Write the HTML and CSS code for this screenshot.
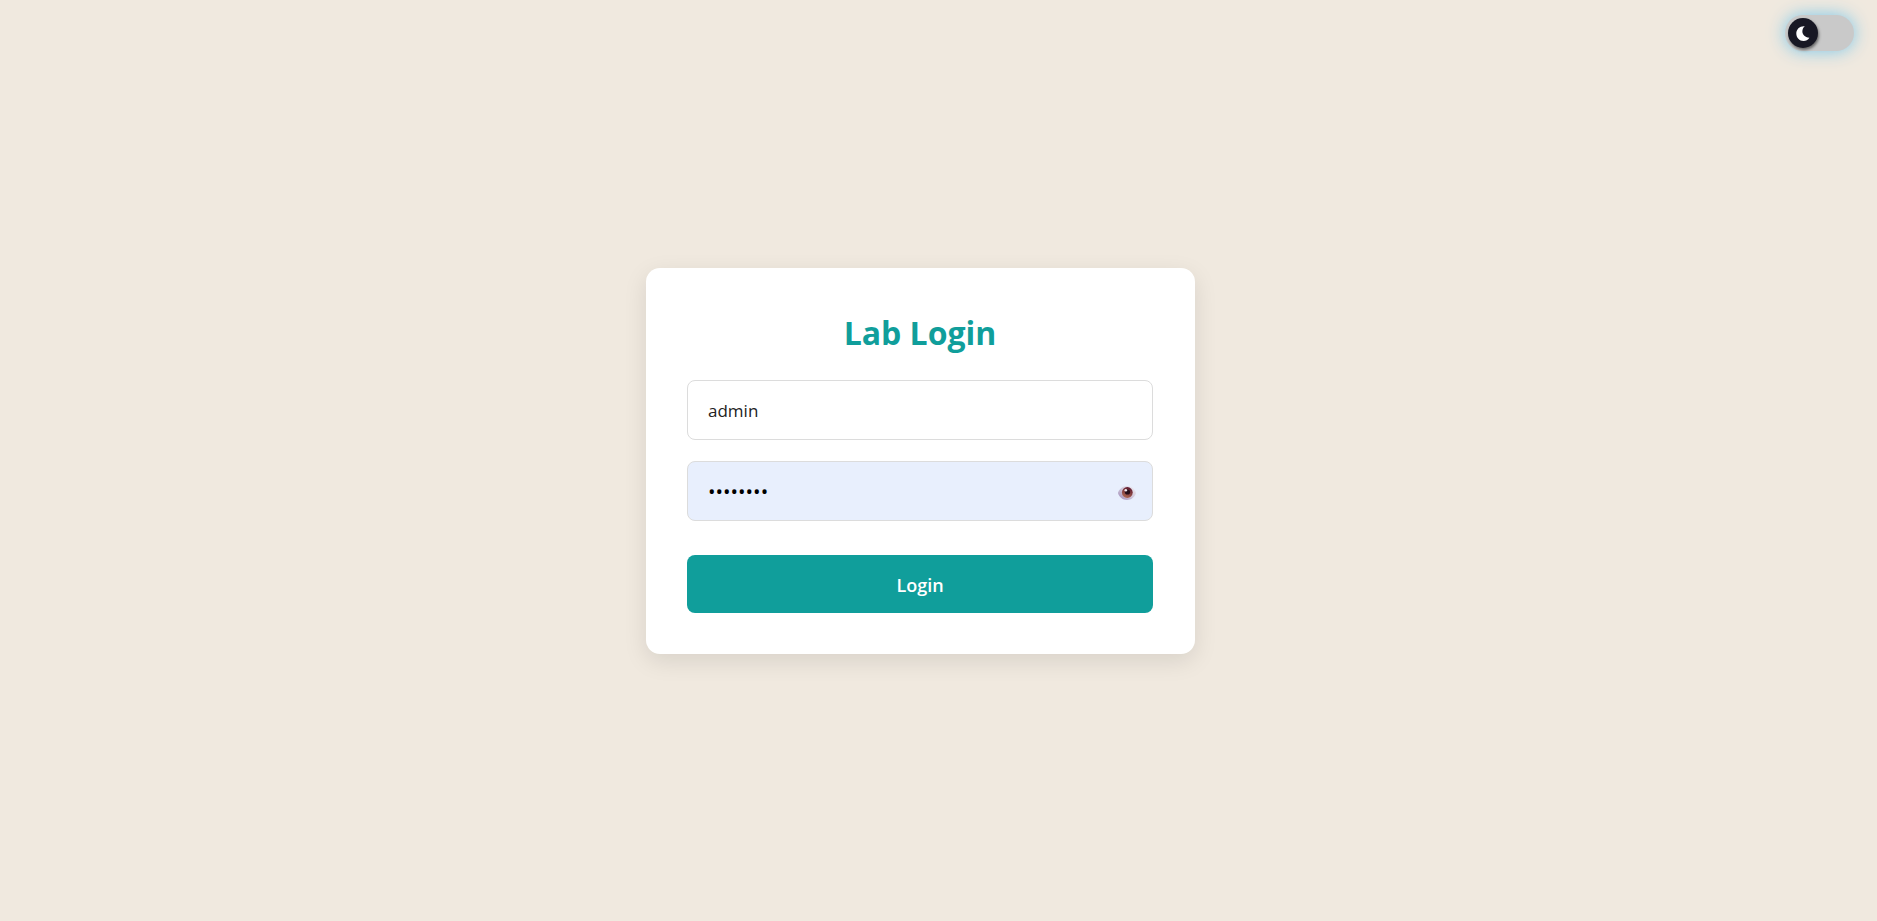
FILE: index.html
```html
<!DOCTYPE html>
<html lang="en">
<head>
<meta charset="utf-8">
<meta name="viewport" content="width=device-width, initial-scale=1">
<title>Lab Login</title>
<link rel="stylesheet" href="styles.css">
</head>
<body>
<label class="theme-toggle">
  <input class="theme-input" type="checkbox" aria-label="Dark mode">
  <span class="theme-knob">
    <svg class="moon" viewBox="0 0 14 15" aria-hidden="true"><path d="M8.800 .2C4.600 3.500 5.600 11.200 13.400 11.700C12 13.800 10 15 7.500 15C3.400 15 .3 11.700 .3 7.500C.3 3 4 -.3 8.800 .2Z" fill="#fff"/></svg>
  </span>
</label>
<main class="page">
  <form class="card">
    <h1 class="title">Lab Login</h1>
    <input class="field" type="text" value="admin" aria-label="Username">
    <div class="password">
      <input class="field field-filled" type="password" value="admin123" aria-label="Password">
      <button class="reveal" type="button" aria-label="Show password">
        <svg class="eye" viewBox="0 0 18 14" aria-hidden="true">
          <defs>
            <linearGradient id="white" x1="0" y1="1" x2="1" y2="0"><stop offset="0" stop-color="#9b86b5"/><stop offset=".5" stop-color="#cfc5d8"/><stop offset="1" stop-color="#f4f2f5"/></linearGradient>
            <linearGradient id="iris" x1=".7" y1="0" x2=".3" y2="1"><stop offset="0" stop-color="#5b1730"/><stop offset="1" stop-color="#b06a52"/></linearGradient>
          </defs>
          <path d="M0 7C1 2.800 5 0 9 0S17 2.800 18 7C17 11.200 13 14 9 14S1 11.200 0 7Z" fill="url(#white)"/>
          <circle cx="9.300" cy="6.500" r="5.400" fill="url(#iris)"/>
          <circle cx="9.500" cy="6" r="2.600" fill="#260e18"/>
          <circle cx="7.800" cy="4.300" r="1.300" fill="#f3e9ee"/>
        </svg>
      </button>
    </div>
    <button class="submit" type="submit">Login</button>
  </form>
</main>
</body>
</html>
```
FILE: styles.css
```css
* { box-sizing: border-box; }

body {
  margin: 0;
  background: #f0e9df;
  font-family: "Segoe UI", "Open Sans", "Noto Sans", sans-serif;
}

.page {
  min-height: 100vh;
  padding: 16px 36px 16px 0;
  display: flex;
  align-items: center;
  justify-content: center;
}

.card {
  width: 100%;
  max-width: 549px;
  padding: 41px 42px 41px 41px;
  display: flex;
  flex-direction: column;
  background: #fff;
  border-radius: 14px;
  box-shadow: 0 7px 23px rgba(0, 0, 0, 0.1);
}

.title {
  margin: 0 0 23px;
  font-size: 32px;
  line-height: 48px;
  font-weight: 700;
  text-align: center;
  color: #109e9b;
}

.field {
  display: block;
  width: 100%;
  height: 60px;
  padding: 2px 20px 0;
  border: 1px solid #dcdcdc;
  border-radius: 8px;
  background: #fff;
  color: #222;
  font-family: inherit;
  font-size: 17px;
}

.password {
  position: relative;
  margin: 21px 0 34px;
}

.field-filled {
  padding-right: 56px;
  background: #e8effd;
  color: #000;
  font-size: 20px;
}

.reveal {
  position: absolute;
  top: 0;
  right: 10px;
  width: 32px;
  height: 100%;
  padding: 4px 0 0;
  border: 0;
  background: none;
  display: flex;
  align-items: center;
  justify-content: center;
  cursor: pointer;
}

.eye { width: 18px; height: 14px; }

.submit {
  height: 58px;
  padding: 3px 0 0;
  border: 0;
  border-radius: 8px;
  background: #109e9b;
  color: #fff;
  font-family: inherit;
  font-size: 18px;
  font-weight: 600;
  cursor: pointer;
}

.theme-toggle {
  position: absolute;
  top: 15px;
  right: 23px;
  width: 69px;
  height: 36px;
  padding: 3px;
  display: flex;
  border-radius: 18px;
  background: #c9c9c9;
  box-shadow: 0 0 17px rgba(110, 195, 235, 0.9);
  cursor: pointer;
}

.theme-input {
  position: absolute;
  inset: 0;
  width: 100%;
  height: 100%;
  margin: 0;
  opacity: 0;
}

.theme-knob {
  width: 30px;
  height: 30px;
  display: flex;
  align-items: center;
  justify-content: center;
  border-radius: 50%;
  background: #181824;
  box-shadow: 1px 2px 3px rgba(0, 0, 0, 0.5);
}

.moon { width: 14px; height: 15px; }
```
